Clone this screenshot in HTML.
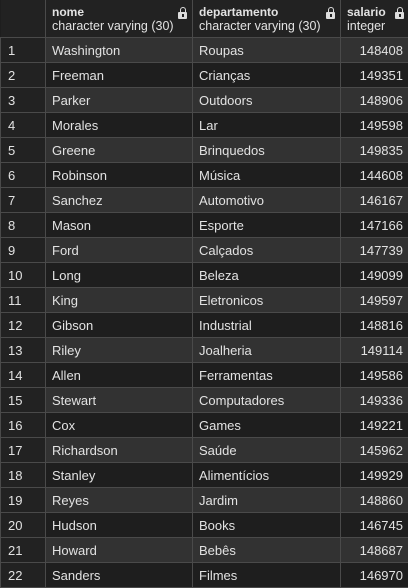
<!DOCTYPE html>
<html><head><style>
body{margin:0;background:#1e1e1e;width:408px;height:588px;overflow:hidden;font-family:"Liberation Sans",sans-serif;color:#e2e2e2}
table{border-collapse:collapse;table-layout:fixed;width:409px}
td,th{border:1px solid #4a4a4a;padding:0 6px;font-size:12.5px;white-space:nowrap;overflow:hidden}
th{height:37px;background:#222;text-align:left;font-weight:normal;vertical-align:middle;position:relative;line-height:14px;border-top:0}
th b{font-weight:bold;font-size:12px}
th span{font-size:12.5px}
.lk{position:absolute;right:5px;top:12px;width:9px;height:7px;background:#ddd;border-radius:1px}
.lk:before{content:"";position:absolute;left:1.5px;top:-5px;width:4px;height:5px;border:1.5px solid #ddd;border-bottom:0;border-radius:3px 3px 0 0}
.lk:after{content:"";position:absolute;left:3.5px;top:2px;width:2px;height:3px;background:#222}
td{height:24px;font-size:13px}
tbody tr.o td{background:#323232}
tbody tr.e td{background:#1e1e1e}
tr td:first-child{background:#222!important;padding-left:7px}
td.n{text-align:right}
</style></head><body>
<table>
<colgroup><col style="width:45px"><col style="width:147px"><col style="width:148px"><col style="width:69px"></colgroup>
<thead><tr><th style="border-left:0"></th><th><b>nome</b><br><span>character varying (30)</span><i class="lk"></i></th><th><b>departamento</b><br><span>character varying (30)</span><i class="lk"></i></th><th><b>salario</b><br><span>integer</span><i class="lk"></i></th></tr></thead>
<tbody>
<tr class="o"><td>1</td><td>Washington</td><td>Roupas</td><td class="n">148408</td></tr>
<tr class="e"><td>2</td><td>Freeman</td><td>Crianças</td><td class="n">149351</td></tr>
<tr class="o"><td>3</td><td>Parker</td><td>Outdoors</td><td class="n">148906</td></tr>
<tr class="e"><td>4</td><td>Morales</td><td>Lar</td><td class="n">149598</td></tr>
<tr class="o"><td>5</td><td>Greene</td><td>Brinquedos</td><td class="n">149835</td></tr>
<tr class="e"><td>6</td><td>Robinson</td><td>Música</td><td class="n">144608</td></tr>
<tr class="o"><td>7</td><td>Sanchez</td><td>Automotivo</td><td class="n">146167</td></tr>
<tr class="e"><td>8</td><td>Mason</td><td>Esporte</td><td class="n">147166</td></tr>
<tr class="o"><td>9</td><td>Ford</td><td>Calçados</td><td class="n">147739</td></tr>
<tr class="e"><td>10</td><td>Long</td><td>Beleza</td><td class="n">149099</td></tr>
<tr class="o"><td>11</td><td>King</td><td>Eletronicos</td><td class="n">149597</td></tr>
<tr class="e"><td>12</td><td>Gibson</td><td>Industrial</td><td class="n">148816</td></tr>
<tr class="o"><td>13</td><td>Riley</td><td>Joalheria</td><td class="n">149114</td></tr>
<tr class="e"><td>14</td><td>Allen</td><td>Ferramentas</td><td class="n">149586</td></tr>
<tr class="o"><td>15</td><td>Stewart</td><td>Computadores</td><td class="n">149336</td></tr>
<tr class="e"><td>16</td><td>Cox</td><td>Games</td><td class="n">149221</td></tr>
<tr class="o"><td>17</td><td>Richardson</td><td>Saúde</td><td class="n">145962</td></tr>
<tr class="e"><td>18</td><td>Stanley</td><td>Alimentícios</td><td class="n">149929</td></tr>
<tr class="o"><td>19</td><td>Reyes</td><td>Jardim</td><td class="n">148860</td></tr>
<tr class="e"><td>20</td><td>Hudson</td><td>Books</td><td class="n">146745</td></tr>
<tr class="o"><td>21</td><td>Howard</td><td>Bebês</td><td class="n">148687</td></tr>
<tr class="e"><td>22</td><td>Sanders</td><td>Filmes</td><td class="n">146970</td></tr>
</tbody>
</table>
</body></html>
